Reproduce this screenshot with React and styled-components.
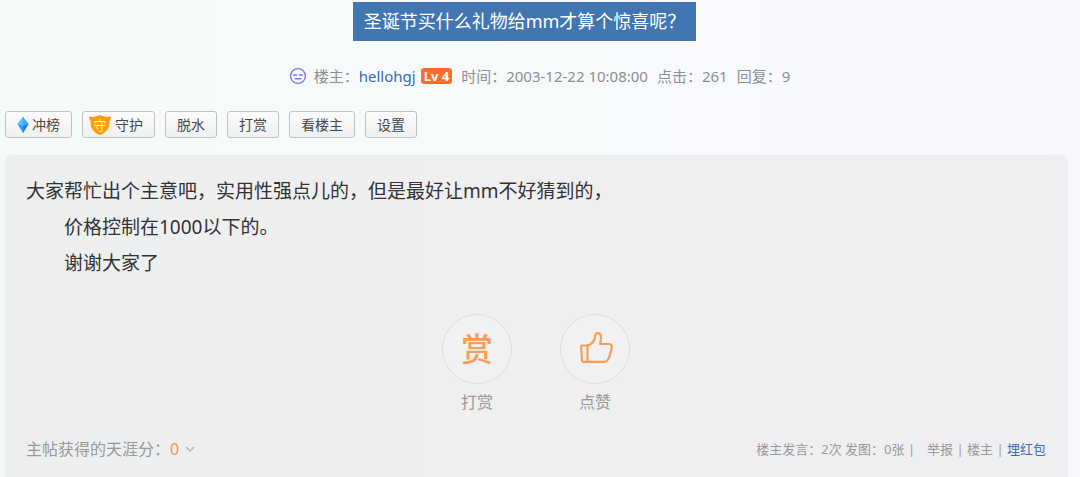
import React, {useState} from 'react'
import styled, {createGlobalStyle} from "styled-components";

const tools = [
    { text: "冲榜", icon: "diamond" },
    { text: "守护", icon: "shield" },
    { text: "脱水" },
    { text: "打赏" },
    { text: "看楼主" },
    { text: "设置" },
];

function Face() {
    return (
        <svg width="18" height="18" viewBox="0 0 18 18" fill="none" stroke="#7b79e4" strokeWidth="1.4" strokeLinecap="round">
            <circle cx="9" cy="9" r="7.4" />
            <path d="M4.600 8h3M10.400 8h3M6.200 11.800h5.600" />
        </svg>
    )
}

function Diamond() {
    return (
        <svg width="12" height="18" viewBox="0 0 12 18">
            <path d="M6 1L11.500 8L6 17L0.500 8Z" fill="#2f9df4" />
            <path d="M6 1L0.500 8L6 10Z" fill="#58c4fb" />
            <path d="M6 1L11.500 8L6 10Z" fill="#3aa9f8" />
            <path d="M6 10L11.500 8L6 17Z" fill="#1c7fe6" />
        </svg>
    )
}

function Shield() {
    return (
        <svg width="24" height="22" viewBox="0 0 24 22">
            <path d="M1 2.500C5 3.500 9 2.500 12 1C15 2.500 19 3.500 23 2.500C23 5 21.500 6 21.500 8C21.500 14 19 18.500 12 21C5 18.500 2.500 14 2.500 8C2.500 6 1 5 1 2.500Z" fill="#ff9c0a" />
            <text x="12" y="15.500" textAnchor="middle" fontSize="13" fill="#fff3d0">守</text>
        </svg>
    )
}

function Thumb() {
    return (
        <svg width="36" height="36" viewBox="0 0 36 36" fill="none" stroke="#f99d56" strokeWidth="2.200" strokeLinejoin="round" strokeLinecap="round">
            <path d="M4 15.500C4 14.800 4.400 14.500 5 14.500H10.500V30.800H6.500C5.600 30.800 5.100 30.400 5 29.500Z" />
            <path d="M10.500 14.500C15.500 13.200 17.600 9.500 18.300 4.500C18.700 1.200 24 1.200 24 5.500C24 8.500 23.600 10.500 23 13H32C34 13 35 14.200 34.700 16C34 21 33 25 31 28.500C30 30.200 29 30.800 27 30.800H10.500" />
        </svg>
    )
}

function Arrow() {
    return (
        <svg width="10" height="8" viewBox="0 0 10 8" fill="none" stroke="#b5b5b5" strokeWidth="1.500">
            <path d="M1 2L5 6L9 2" />
        </svg>
    )
}

export default function App() {
    const [open, setOpen] = useState(false);

    return <>
        <GlobalStyle />
        <Page>
            <Title>圣诞节买什么礼物给mm才算个惊喜呢？</Title>

            <Meta>
                <Author>
                    <Face />
                    <span>楼主：<Link href="#author">hellohgj</Link></span>
                    <Level>Lv 4</Level>
                </Author>
                <span>时间：2003-12-22 10:08:00</span>
                <span>点击：261</span>
                <span>回复：9</span>
            </Meta>

            <Toolbar>{
                tools.map((tool, index) => {
                    return (
                        <ToolButton key={index} type="button" $icon={tool.icon}>
                            {tool.icon === "diamond" && <Diamond />}
                            {tool.icon === "shield" && <Shield />}
                            {tool.text}
                        </ToolButton>
                    )
                })
            }
            </Toolbar>

            <Post>
                <Content>
                    <p>大家帮忙出个主意吧，实用性强点儿的，但是最好让mm不好猜到的，</p>
                    <p className="indent">价格控制在1000以下的。</p>
                    <p className="indent">谢谢大家了</p>
                </Content>

                <Actions>
                    <Action type="button">
                        <span className="circle">赏</span>
                        打赏
                    </Action>
                    <Action type="button">
                        <span className="circle"><Thumb /></span>
                        点赞
                    </Action>
                </Actions>

                <Footer>
                    <Score type="button" aria-expanded={open} onClick={() => setOpen(!open)}>
                        主帖获得的天涯分：<strong>0</strong>
                        <Arrow />
                    </Score>
                    <Info>
                        <span>楼主发言：2次 发图：0张 |</span>
                        <span>
                            <Link href="#report" $plain>举报</Link> | <Link href="#author" $plain>楼主</Link> | <Link href="#packet">埋红包</Link>
                        </span>
                    </Info>
                </Footer>
            </Post>
        </Page>
    </>
}

const GlobalStyle = createGlobalStyle`
    * {
        box-sizing: border-box;
    }

    body {
        margin: 0;
        background: linear-gradient(90deg, #f4faf9 0%, #f7fafb 40%, #f7f8fc 100%);
        font-family: "Noto Sans", "Noto Sans CJK SC", sans-serif;
    }

    button {
        font-family: inherit;
        cursor: pointer;
    }
`;

const Page = styled.main`
    display: flex;
    flex-direction: column;
    padding: 2px 12px 0 5px;
`;

const Title = styled.h1`
    align-self: center;
    margin: 0 24px 0 0;
    padding: 0 11px;
    background-color: #4276b2;
    color: #fff;
    font-size: 18px;
    font-weight: 400;
    line-height: 39px;
`;

const Meta = styled.div`
    display: flex;
    justify-content: center;
    align-items: center;
    gap: 9px;
    margin-top: 23px;
    padding-left: 6px;
    color: #8c8f90;
    font-size: 15px;
    line-height: 24px;
`;

const Author = styled.div`
    display: flex;
    align-items: center;
    gap: 5px;

    svg {
        margin-right: 2px;
    }
`;

const Link = styled.a`
    color: ${({ $plain }) => $plain ? "inherit" : "#3a69b4"};
    text-decoration: none;

    &:hover {
        text-decoration: underline;
    }
`;

const Level = styled.span`
    padding: 0 3px;
    border-radius: 3px;
    background-color: #fd6c2b;
    color: #fff;
    font-size: 13px;
    font-weight: 700;
    line-height: 16px;
`;

const Toolbar = styled.div`
    display: flex;
    gap: 10px;
    margin-top: 23px;
`;

const ToolButton = styled.button`
    display: flex;
    align-items: center;
    gap: 3px;
    height: 27px;
    padding: 0 11px;
    padding-left: ${({ $icon }) => $icon === "shield" ? "5px" : "11px"};
    border: 1px solid #c0c2c3;
    border-radius: 3px;
    background: linear-gradient(#fbfbfb, #f0f0f1);
    color: #484848;
    font-size: 14px;
    line-height: 20px;
`;

const Post = styled.article`
    margin-top: 17px;
    padding: 18px 22px 16px 21px;
    border-radius: 6px 6px 0 0;
    background: linear-gradient(90deg, #edefef 0%, #efeef0 40%, #efeef0 100%);
`;

const Content = styled.div`
    color: #333;
    font-size: 19px;
    line-height: 36px;

    p {
        margin: 0;
    }

    .indent {
        padding-left: 2em;
    }
`;

const Actions = styled.div`
    display: flex;
    justify-content: center;
    gap: 48px;
    margin-top: 33px;
`;

const Action = styled.button`
    display: flex;
    flex-direction: column;
    align-items: center;
    gap: 6px;
    padding: 0;
    border: none;
    background: none;
    color: #999;
    font-size: 16px;
    line-height: 24px;

    .circle {
        display: flex;
        align-items: center;
        justify-content: center;
        width: 70px;
        height: 70px;
        border: 1px solid #dddcde;
        border-radius: 50%;
        background-color: #f1f0f2;
        color: #f99d56;
        font-size: 32px;
        font-weight: 500;
    }
`;

const Footer = styled.div`
    display: flex;
    justify-content: space-between;
    align-items: center;
    margin-top: 23px;
    color: #999;
`;

const Score = styled.button`
    display: flex;
    align-items: center;
    padding: 0;
    border: none;
    background: none;
    color: inherit;
    font-size: 16px;
    line-height: 24px;

    strong {
        margin-right: 6px;
        color: #fb8f47;
        font-weight: 400;
    }
`;

const Info = styled.div`
    display: flex;
    gap: 12px;
    font-size: 13px;
    line-height: 24px;
`;
